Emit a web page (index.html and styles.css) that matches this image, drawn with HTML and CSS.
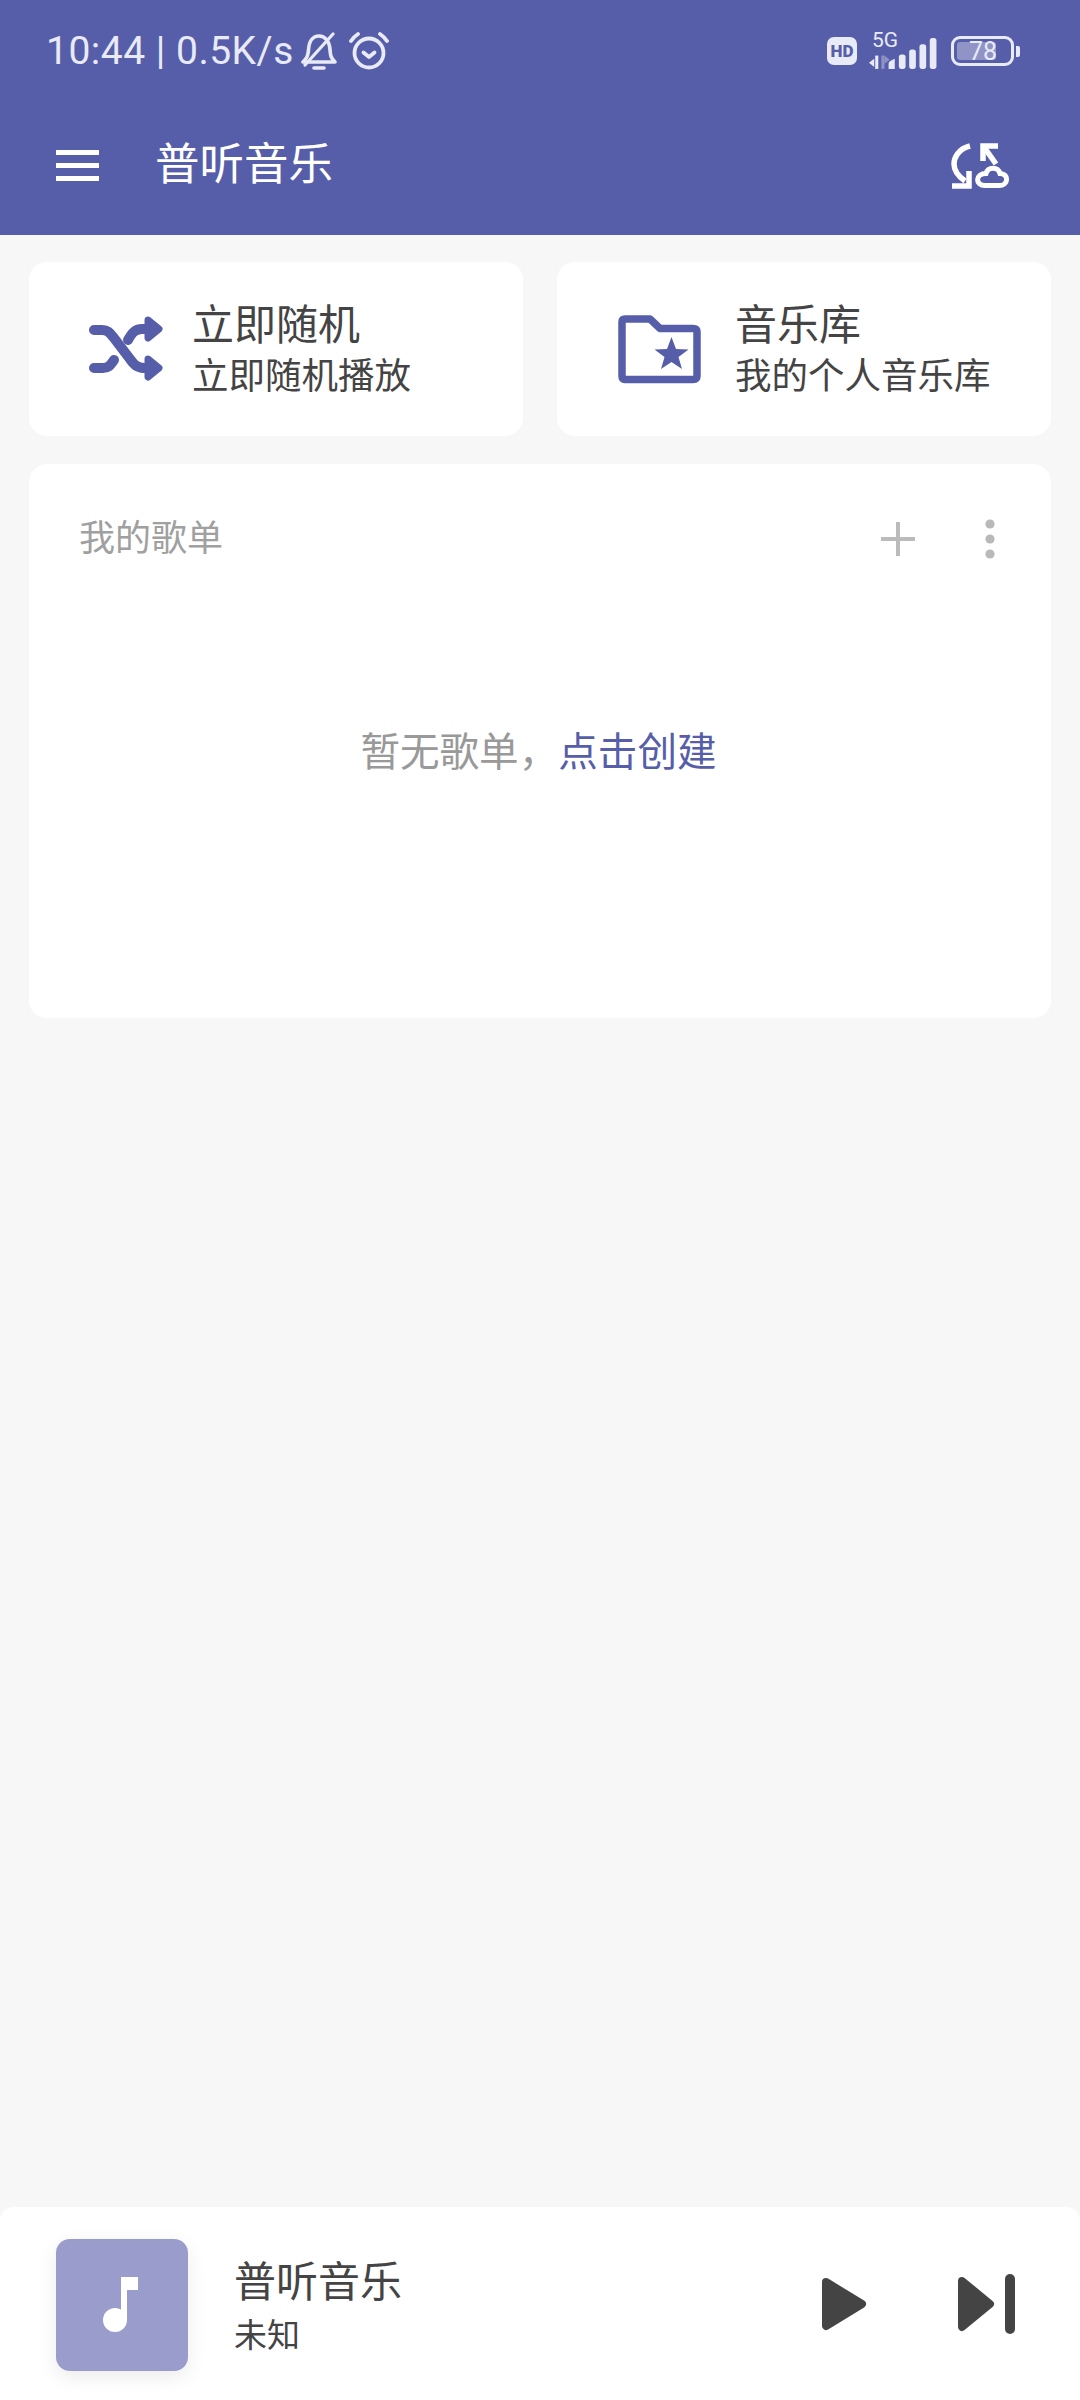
FILE: index.html
```html
<!DOCTYPE html>
<html lang="zh-CN">
<head>
    <meta charset="UTF-8">
    <meta name="viewport" content="width=device-width, initial-scale=1.0">
    <title>普听音乐</title>
    <link rel="stylesheet" href="styles.css">
</head>
<body>
    <div class="page">
        <header class="app-header">
            <div class="status-bar">
                <div class="status-left">
                    <span class="status-time">10:44 | 0.5K/s</span>
                    <svg class="icon-bell" viewBox="0 0 36 38" fill="none" stroke="#e8eaf6" stroke-width="3.6" stroke-linecap="round" stroke-linejoin="round">
                        <path d="M2 30H34C30 26 29.5 24 29 18C28.5 9 24 4 18 4C12 4 8 9 7.5 18C7 24 6 26 2 30Z"/>
                        <path d="M4 33L32 2" stroke-width="3.2"/>
                        <path d="M13 36H23"/>
                    </svg>
                    <svg class="icon-alarm" viewBox="0 0 40 38" fill="none" stroke="#e8eaf6" stroke-width="3.8" stroke-linecap="round" stroke-linejoin="round">
                        <circle cx="20" cy="21" r="14.5"/>
                        <path d="M14.5 20.5L20 25L25.5 20.5"/>
                        <path d="M2 9C4 6 6 4 9 2"/>
                        <path d="M38 9C36 6 34 4 31 2"/>
                    </svg>
                </div>
                <div class="status-right">
                    <span class="status-hd">HD</span>
                    <div class="status-signal">
                        <span class="status-5g">5G</span>
                        <svg class="icon-signal" viewBox="0 0 68 32">
                            <path d="M6 21L1 25L6 29Z" fill="#e8eaf6"/>
                            <rect x="7" y="18" width="3" height="13" fill="#e8eaf6"/>
                            <rect x="13" y="18" width="3" height="13" fill="#8f93c6"/>
                            <path d="M16 18L21 22L16 26Z" fill="#8f93c6"/>
                            <path d="M20 31V26Q20 24 22 23L26 21V31Z" fill="#e8eaf6"/>
                            <rect x="30" y="17" width="6.5" height="14" rx="2.5" fill="#e8eaf6"/>
                            <rect x="40" y="12" width="6.5" height="19" rx="2.5" fill="#e8eaf6"/>
                            <rect x="50" y="7" width="6.5" height="24" rx="2.5" fill="#e8eaf6"/>
                            <rect x="60" y="1" width="6.5" height="30" rx="2.5" fill="#e8eaf6"/>
                        </svg>
                    </div>
                    <div class="battery">
                        <div class="battery-body">
                            <div class="battery-fill"></div>
                            <span class="battery-text">78</span>
                        </div>
                        <div class="battery-cap"></div>
                    </div>
                </div>
            </div>
            <div class="toolbar">
                <div class="menu-btn">
                    <span></span>
                    <span></span>
                    <span></span>
                </div>
                <div class="toolbar-title">普听音乐</div>
                <svg class="icon-sync" viewBox="950 141 62 50" fill="none" stroke="#fff" stroke-width="5.5">
                    <path d="M970 146C958 149 954 158 954 164C954 171 958 176 965 181"/>
                    <path d="M952 186H969V171"/>
                    <path d="M998 146H983V161"/>
                    <path d="M984 147L996 164"/>
                    <path d="M985 185.5H999C1009 185.5 1009 173.5 1000 173.5C998 166.5 988 166.5 986 173.5C975 173.5 975 185.5 985 185.5Z" stroke-width="5"/>
                </svg>
            </div>
        </header>

        <main class="content">
            <div class="quick-row">
                <div class="quick-card">
                    <svg class="icon-shuffle" viewBox="88 316 78 70" fill="none" stroke="#575ea9" stroke-width="10" stroke-linecap="round" stroke-linejoin="round">
                        <path d="M94 332H102C108 332 110 335 114 340L130 361C135 368 138 370 146 370H152"/>
                        <path d="M94 370H103C108 370 110 368 114 362"/>
                        <path d="M128 342C132 335 135 331 142 331H152"/>
                        <path d="M148 322L159 331L148 340Z" fill="#575ea9" stroke-width="7"/>
                        <path d="M148 361L159 370L148 379Z" fill="#575ea9" stroke-width="7"/>
                    </svg>
                    <div class="quick-text">
                        <div class="quick-title">立即随机</div>
                        <div class="quick-sub">立即随机播放</div>
                    </div>
                </div>
                <div class="quick-card">
                    <svg class="icon-folder" viewBox="616 316 88 74" fill="none" stroke="#575ea9" stroke-width="7.5" stroke-linejoin="round">
                        <path d="M622 326Q622 323 625 323H650L660 332.5H693Q697 332.5 697 336V380Q697 383.5 693 383.5H625Q622 383.5 622 380Z"/>
                        <path d="M671.5 341L676 353L688.5 353.5L678.5 361L682 373L671.5 366L661 373L664.5 361L654.5 353.5L667 353Z" fill="#575ea9" stroke="none"/>
                    </svg>
                    <div class="quick-text">
                        <div class="quick-title">音乐库</div>
                        <div class="quick-sub">我的个人音乐库</div>
                    </div>
                </div>
            </div>

            <section class="playlist-card">
                <div class="playlist-head">
                    <span class="playlist-label">我的歌单</span>
                    <div class="playlist-actions">
                        <svg class="icon-plus" viewBox="0 0 34 34" stroke="#bbb" stroke-width="4">
                            <path d="M17 0V34M0 17H34"/>
                        </svg>
                        <svg class="icon-more" viewBox="0 0 10 40" fill="#b9b9b9">
                            <circle cx="5" cy="5" r="4.6"/>
                            <circle cx="5" cy="20" r="4.6"/>
                            <circle cx="5" cy="35" r="4.6"/>
                        </svg>
                    </div>
                </div>
                <div class="playlist-empty">暂无歌单，<span class="playlist-link">点击创建</span></div>
            </section>
        </main>

        <footer class="player">
            <div class="player-art">
                <svg class="icon-note" viewBox="0 0 38 56" fill="#fff">
                    <circle cx="12" cy="43" r="12"/>
                    <path d="M18 0H35V13H24V43H18Z"/>
                </svg>
            </div>
            <div class="player-text">
                <div class="player-title">普听音乐</div>
                <div class="player-artist">未知</div>
            </div>
            <svg class="icon-play" viewBox="0 0 46 54" fill="#444" stroke="#444" stroke-width="8" stroke-linejoin="round">
                <path d="M5 5L41 27L5 49Z"/>
            </svg>
            <svg class="icon-next" viewBox="0 0 60 60" fill="#444">
                <path d="M5 7L33 30L5 53Z" stroke="#444" stroke-width="8" stroke-linejoin="round"/>
                <rect x="48" y="0" width="10" height="60" rx="5"/>
            </svg>
        </footer>
    </div>
</body>
</html>
```

FILE: styles.css
```css
* {
    box-sizing: border-box;
}

body {
    margin: 0;
    padding: 0;
    background-color: #f7f7f7;
    font-family: "Noto Sans CJK SC", "Noto Sans", sans-serif;
    color: #444;
}

.page {
    width: 1080px;
    height: 2400px;
    display: flex;
    flex-direction: column;
    overflow: hidden;
}

.app-header {
    height: 235px;
    background-color: #575ea9;
    flex-shrink: 0;
}

.status-bar {
    height: 102px;
    padding: 0 60px 0 46px;
    display: flex;
    justify-content: space-between;
    align-items: center;
}

.status-left {
    display: flex;
    align-items: center;
}

.status-time {
    font-family: Roboto, sans-serif;
    font-size: 39px;
    color: #e8eaf6;
    white-space: nowrap;
    letter-spacing: 0.5px;
}

.icon-bell {
    width: 36px;
    height: 38px;
    margin-left: 7px;
}

.icon-alarm {
    width: 40px;
    height: 38px;
    margin-left: 12px;
}

.status-right {
    display: flex;
    align-items: center;
}

.status-hd {
    width: 30px;
    height: 28px;
    border-radius: 7px;
    background-color: #e8eaf6;
    color: #575ea9;
    font-family: Roboto, sans-serif;
    font-weight: 900;
    font-size: 17px;
    line-height: 28px;
    text-align: center;
}

.status-signal {
    position: relative;
    width: 70px;
    height: 33px;
    margin-left: 11px;
    margin-top: 4px;
}

.status-5g {
    position: absolute;
    left: 4px;
    top: -7px;
    font-family: Roboto, sans-serif;
    font-size: 21px;
    line-height: 20px;
    color: #e8eaf6;
}

.icon-signal {
    display: block;
    width: 70px;
    height: 33px;
}

.battery {
    display: flex;
    align-items: center;
    margin-left: 13px;
}

.battery-body {
    position: relative;
    width: 63px;
    height: 30px;
    border: 3px solid #e8eaf6;
    border-radius: 9px;
    padding: 3px;
}

.battery-fill {
    width: 39px;
    height: 100%;
    background-color: #8f93c6;
    border-radius: 3px;
}

.battery-text {
    position: absolute;
    left: 15px;
    top: 1px;
    font-family: Roboto, sans-serif;
    font-size: 25px;
    line-height: 24px;
    color: #e8eaf6;
}

.battery-cap {
    width: 4px;
    height: 11px;
    margin-left: 2px;
    background-color: #e8eaf6;
    border-radius: 0 2px 2px 0;
}

.toolbar {
    height: 133px;
    padding: 0 70px 6px 56px;
    display: flex;
    align-items: center;
}

.menu-btn {
    width: 43px;
    display: flex;
    flex-direction: column;
    gap: 8.5px;
}

.menu-btn span {
    display: block;
    height: 4.5px;
    background-color: #fff;
}

.toolbar-title {
    margin-left: 56px;
    margin-top: -9px;
    font-size: 44.5px;
    line-height: 60px;
    color: #fff;
    flex: 1;
}

.icon-sync {
    width: 62px;
    height: 50px;
    margin-right: -2px;
}

.content {
    flex: 1;
    padding: 27px 29px 0;
}

.quick-row {
    display: flex;
    gap: 34px;
}

.quick-card {
    flex: 1;
    height: 174px;
    background-color: #fff;
    border-radius: 18px;
    display: flex;
    align-items: center;
}

.icon-shuffle {
    width: 78px;
    height: 70px;
    margin-left: 59px;
}

.icon-folder {
    width: 88px;
    height: 74px;
    margin-left: 59px;
}

.quick-card:first-child .quick-text {
    margin-left: 26px;
}

.quick-card:last-child .quick-text {
    margin-left: 31px;
}

.quick-title {
    font-size: 42px;
    line-height: 52px;
    margin-top: -3px;
}

.quick-sub {
    font-size: 36.5px;
    line-height: 52px;
}

.playlist-card {
    height: 554px;
    margin-top: 28px;
    background-color: #fff;
    border-radius: 18px;
    padding: 0 56px 0 50px;
}

.playlist-head {
    height: 90px;
    padding-top: 30px;
    display: flex;
    justify-content: space-between;
    align-items: center;
    box-sizing: content-box;
}

.playlist-label {
    font-size: 36px;
    margin-top: -9px;
    color: #a0a0a0;
}

.playlist-actions {
    display: flex;
    align-items: center;
    gap: 70px;
}

.icon-plus {
    width: 34px;
    height: 34px;
}

.icon-more {
    width: 10px;
    height: 40px;
}

.playlist-empty {
    margin-top: 135px;
    padding-left: 3px;
    text-align: center;
    font-size: 39.6px;
    line-height: 60px;
    color: #999;
}

.playlist-link {
    color: #575ea9;
}

.player {
    height: 193px;
    flex-shrink: 0;
    background-color: #fff;
    border-radius: 14px 14px 0 0;
    padding: 0 63px 0 56px;
    display: flex;
    align-items: center;
}

.player-art {
    width: 132px;
    height: 132px;
    margin-top: 3px;
    background-color: #9a9ccc;
    border-radius: 14px;
    box-shadow: 0 6px 20px rgba(0, 0, 0, 0.08);
    display: flex;
    align-items: center;
    justify-content: center;
}

.icon-note {
    width: 38px;
    height: 56px;
}

.player-text {
    flex: 1;
    margin-left: 46px;
    padding-top: 3px;
}

.player-title {
    font-size: 42px;
    line-height: 56px;
}

.player-artist {
    font-size: 33px;
    line-height: 52px;
}

.icon-play {
    width: 46px;
    height: 54px;
}

.icon-next {
    width: 60px;
    height: 60px;
    margin-left: 90px;
}
```
